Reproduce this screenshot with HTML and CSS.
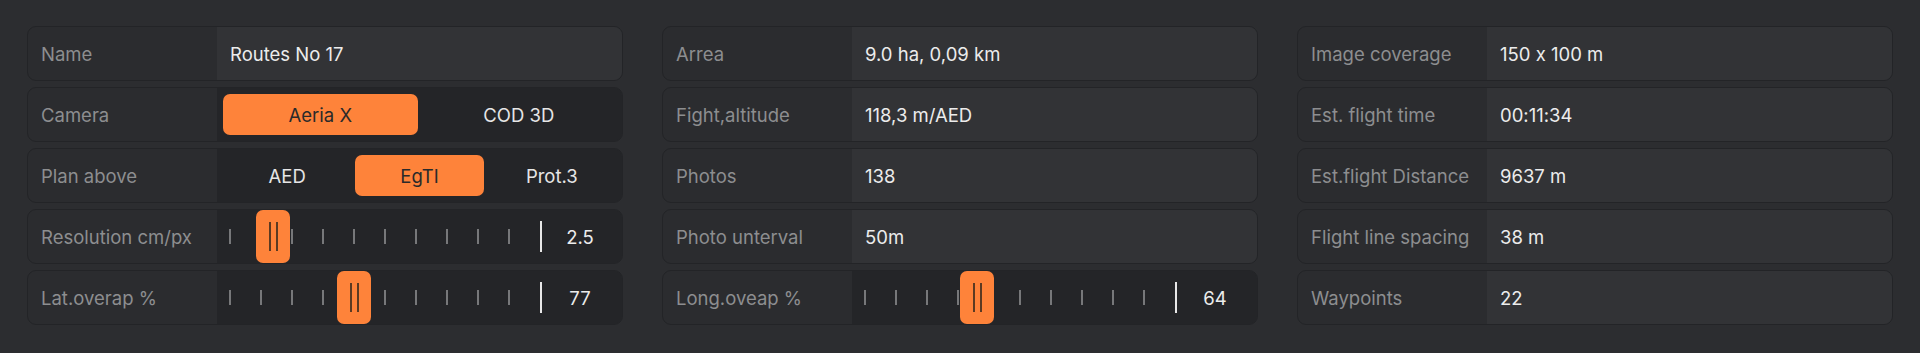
FILE: index.html
```html
<!DOCTYPE html>
<html lang="en">
<head>
    <meta charset="UTF-8">
    <title>Flight plan</title>
    <link rel="stylesheet" href="styles.css">
</head>
<body>
    <div class="panel">
        <div class="col">
            <div class="row">
                <div class="label">Name</div>
                <div class="value text">Routes No 17</div>
            </div>
            <div class="row">
                <div class="label">Camera</div>
                <div class="value seg">
                    <div class="opt active">Aeria X</div>
                    <div class="opt">COD 3D</div>
                </div>
            </div>
            <div class="row">
                <div class="label">Plan above</div>
                <div class="value seg">
                    <div class="opt">AED</div>
                    <div class="opt active">EgTI</div>
                    <div class="opt">Prot.3</div>
                </div>
            </div>
            <div class="row">
                <div class="label">Resolution cm/px</div>
                <div class="value slider">
                    <div class="track">
                        <span class="tick"></span><span class="tick"></span><span class="tick"></span><span class="tick"></span><span class="tick"></span>
                        <span class="tick"></span><span class="tick"></span><span class="tick"></span><span class="tick"></span><span class="tick"></span>
                        <span class="major"></span>
                        <div class="thumb" style="left: 39px"><i></i><i></i></div>
                    </div>
                    <div class="num">2.5</div>
                </div>
            </div>
            <div class="row">
                <div class="label">Lat.overap %</div>
                <div class="value slider">
                    <div class="track">
                        <span class="tick"></span><span class="tick"></span><span class="tick"></span><span class="tick"></span><span class="tick"></span>
                        <span class="tick"></span><span class="tick"></span><span class="tick"></span><span class="tick"></span><span class="tick"></span>
                        <span class="major"></span>
                        <div class="thumb" style="left: 120px"><i></i><i></i></div>
                    </div>
                    <div class="num">77</div>
                </div>
            </div>
        </div>

        <div class="col">
            <div class="row">
                <div class="label">Arrea</div>
                <div class="value text">9.0 ha, 0,09 km</div>
            </div>
            <div class="row">
                <div class="label">Fight,altitude</div>
                <div class="value text">118,3 m/AED</div>
            </div>
            <div class="row">
                <div class="label">Photos</div>
                <div class="value text">138</div>
            </div>
            <div class="row">
                <div class="label">Photo unterval</div>
                <div class="value text">50m</div>
            </div>
            <div class="row">
                <div class="label">Long.oveap %</div>
                <div class="value slider">
                    <div class="track">
                        <span class="tick"></span><span class="tick"></span><span class="tick"></span><span class="tick"></span><span class="tick"></span>
                        <span class="tick"></span><span class="tick"></span><span class="tick"></span><span class="tick"></span><span class="tick"></span>
                        <span class="major"></span>
                        <div class="thumb" style="left: 108px"><i></i><i></i></div>
                    </div>
                    <div class="num">64</div>
                </div>
            </div>
        </div>

        <div class="col">
            <div class="row">
                <div class="label">Image coverage</div>
                <div class="value text">150 x 100 m</div>
            </div>
            <div class="row">
                <div class="label">Est. flight time</div>
                <div class="value text">00:11:34</div>
            </div>
            <div class="row">
                <div class="label">Est.flight Distance</div>
                <div class="value text">9637 m</div>
            </div>
            <div class="row">
                <div class="label">Flight line spacing</div>
                <div class="value text">38 m</div>
            </div>
            <div class="row">
                <div class="label">Waypoints</div>
                <div class="value text">22</div>
            </div>
        </div>
    </div>
</body>
</html>
```

FILE: styles.css
```css
body {
    margin: 0;
    background: #2c2d30;
    font-family: Inter, "Noto Sans", sans-serif;
    font-size: 18.5px;
    font-feature-settings: "calt" 0;
}
.panel {
    display: grid;
    grid-template-columns: repeat(3, 1fr);
    gap: 39px;
    padding: 26px 27px;
}
.col {
    display: flex;
    flex-direction: column;
    gap: 6px;
}
.row {
    display: grid;
    grid-template-columns: 189px 1fr;
    height: 55px;
    box-sizing: border-box;
    border: 1px solid #232427;
    border-radius: 9px;
    background: #2b2c2f;
    overflow: hidden;
}
.label {
    display: flex;
    align-items: center;
    padding-left: 13px;
    color: #8d8e90;
    white-space: nowrap;
}
.value {
    display: flex;
    align-items: center;
    color: #ececec;
}
.value.text {
    background: #323336;
    padding-left: 13px;
}
.value.seg {
    background: #242528;
    padding: 6px;
    gap: 4px;
}
.opt {
    flex: 1;
    height: 100%;
    display: flex;
    align-items: center;
    justify-content: center;
    border-radius: 7px;
    color: #e6e6e6;
}
.opt.active {
    background: #fe833a;
    color: #2a2a2a;
}
.value.slider {
    background: #242528;
}
.track {
    position: relative;
    height: 100%;
    display: flex;
    align-items: center;
    gap: 29px;
    padding-left: 12px;
}
.tick {
    width: 2px;
    height: 15px;
    background: #77787a;
}
.major {
    width: 2px;
    height: 31px;
    margin-left: 1px;
    background: #e8e8e8;
}
.thumb {
    position: absolute;
    top: 0;
    bottom: 0;
    width: 34px;
    border-radius: 7px;
    background: #fe833a;
    display: flex;
    align-items: center;
    justify-content: center;
    gap: 5px;
}
.thumb i {
    width: 2px;
    height: 29px;
    background: #5b3a22;
}
.num {
    flex: 1;
    text-align: center;
    padding-right: 4px;
}
```
